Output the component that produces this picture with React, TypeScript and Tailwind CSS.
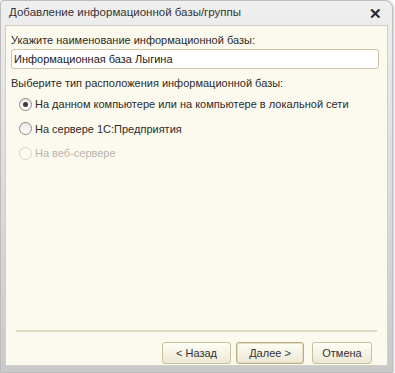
import React from "react";

function Radio({ checked, disabled, label }: { checked?: boolean; disabled?: boolean; label: string }) {
  return (
    <label className={`flex items-center gap-[3px] h-[24.5px] ${disabled ? "text-[#b8b6ab]" : "text-[#2b2b2b]"}`}>
      <span
        className={`w-[13px] h-[13px] rounded-full border flex items-center justify-center ${
          disabled ? "border-[#d6d4c8] bg-[#fbfaf2]" : "border-[#8a8a80] bg-gradient-to-b from-[#e8e8e4] to-white"
        }`}
      >
        {checked && <span className="w-[5px] h-[5px] rounded-full bg-[#3a3a3a]" />}
      </span>
      <span>{label}</span>
    </label>
  );
}

function Btn({ children, primary, w }: { children: React.ReactNode; primary?: boolean; w: string }) {
  return (
    <button
      className={`${w} h-[22px] rounded-[3px] border bg-gradient-to-b from-[#fefef8] to-[#ece8d4] text-[#333] ${
        primary ? "border-[#b5ad88] shadow-[inset_0_0_0_1px_#e6dfbd]" : "border-[#c8c1a0]"
      }`}
    >
      {children}
    </button>
  );
}

export default function App() {
  return (
    <div
      className="w-[395px] h-[373px] bg-white text-[11px]"
      style={{ fontFamily: '"Liberation Sans", Arial, sans-serif' }}
    >
      <div className="w-[393px] h-[373px] rounded-tr-[8px] rounded-tl-[3px] bg-gradient-to-b from-[#efefef] to-[#c9c9c9] border border-[#bdbdbd] flex flex-col px-[4px] pb-[6px] shadow-[1px_0_2px_#d0d0d0]">
        <div className="h-[24px] flex items-center justify-between pl-[4px] pr-[6px] text-[#333] text-[11.5px]">
          <span>Добавление информационной базы/группы</span>
          <span className="text-[15px] font-bold text-[#2a2a2a] leading-none">✕</span>
        </div>
        <div className="flex-1 bg-[#fcfaee] border border-[#d0cfc6] flex flex-col px-[5px] pt-[8px]">
          <div className="text-[#2b2b2b] leading-[13px]">Укажите наименование информационной базы:</div>
          <div className="mt-[2px] h-[20px] w-[368px] bg-white border border-[#cbc5a4] rounded-[3px] flex items-center px-[2px] text-[#222]">
            Информационная база Лыгина
          </div>
          <div className="mt-[8px] text-[#2b2b2b] leading-[13px]">Выберите тип расположения информационной базы:</div>
          <div className="mt-[2px] pl-[8px] flex flex-col">
            <Radio checked label="На данном компьютере или на компьютере в локальной сети" />
            <Radio label="На сервере 1С:Предприятия" />
            <Radio disabled label="На веб-сервере" />
          </div>
          <div className="flex-1" />
          <div className="mx-[5px] h-[2px] bg-[#dcd8bd]" />
          <div className="flex items-start justify-end pr-[10px] pt-[10px] pb-[1px]">
            <Btn w="w-[69px]">&lt; Назад</Btn>
            <div className="w-[5px]" />
            <Btn primary w="w-[68px]">Далее &gt;</Btn>
            <div className="w-[8px]" />
            <Btn w="w-[60px]">Отмена</Btn>
          </div>
        </div>
      </div>
    </div>
  );
}
